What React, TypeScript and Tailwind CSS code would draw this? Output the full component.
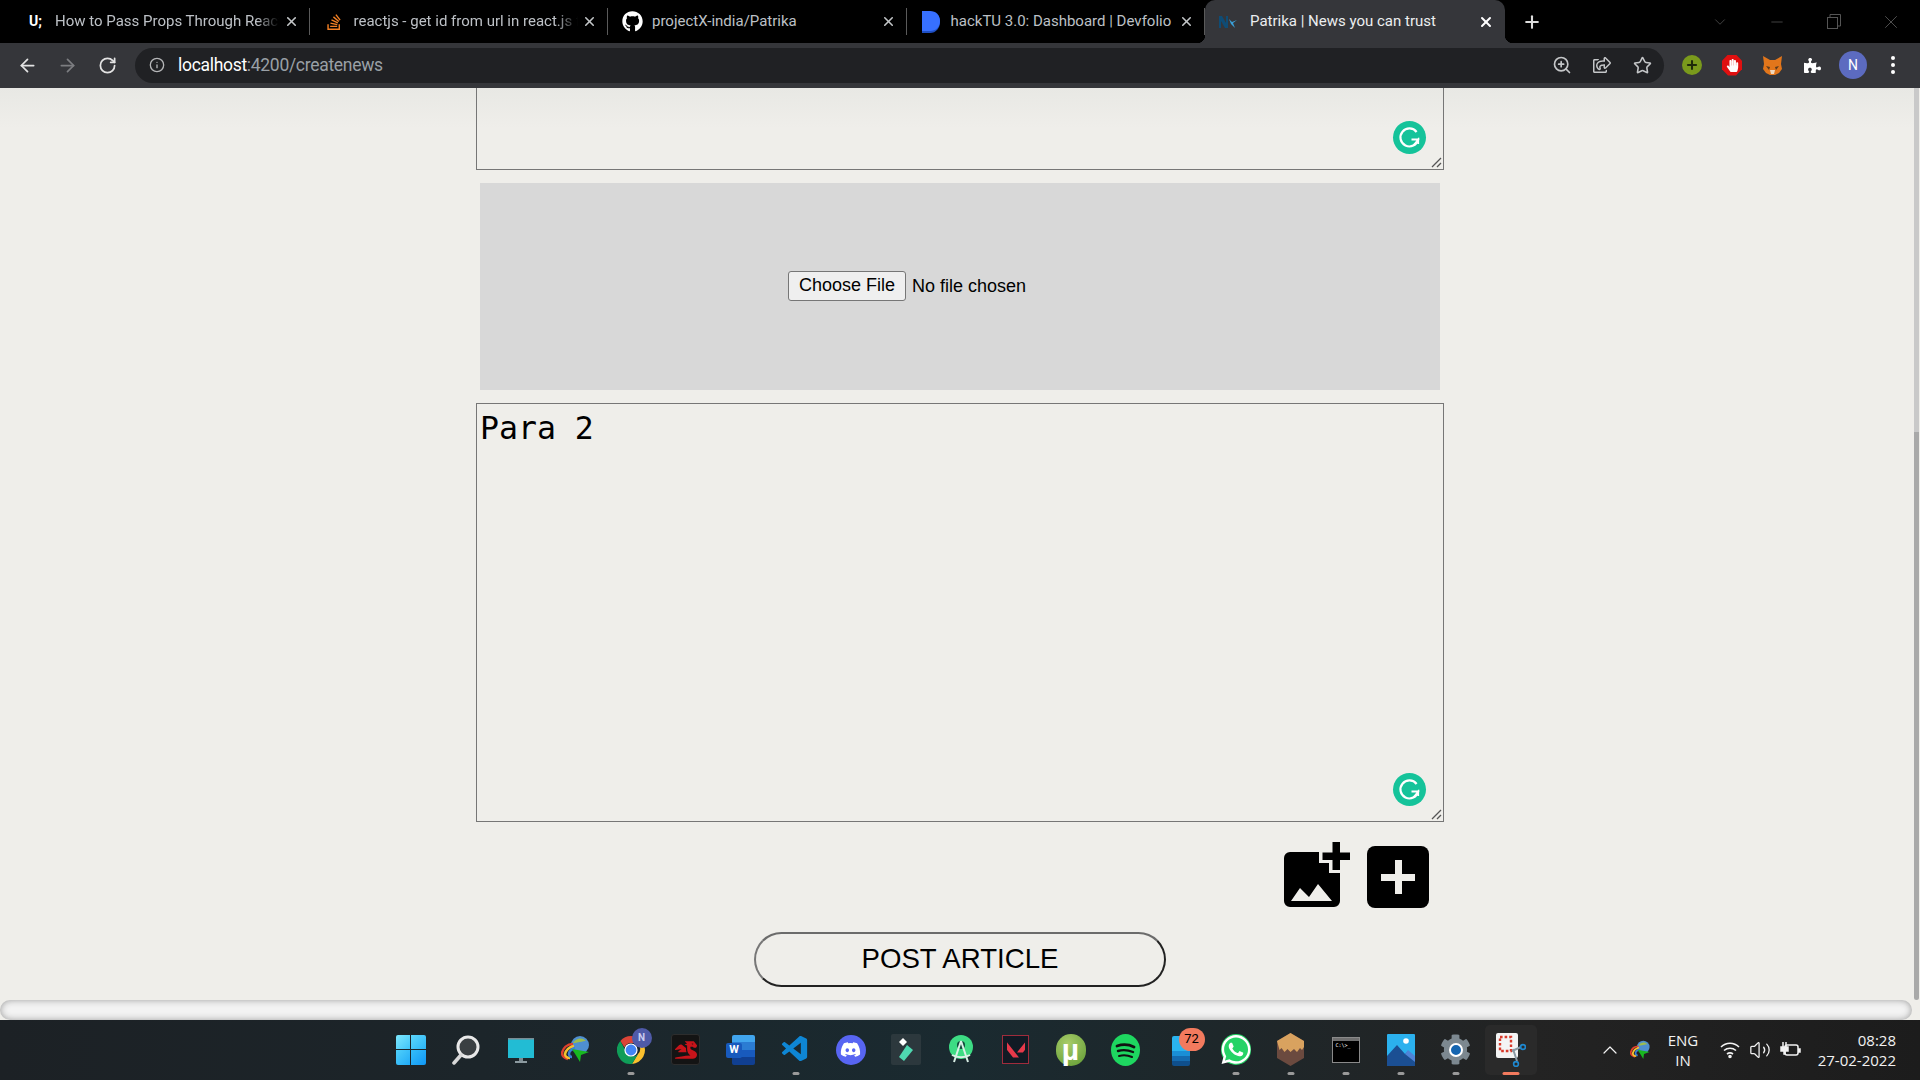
import React from 'react';
import { ArrowLeft, ArrowRight, RotateCw, Info, ZoomIn, Star, Plus, X, Minus, ChevronDown, ChevronUp, Volume2 } from 'lucide-react';
import { FaGithub, FaStackOverflow, FaRegShareSquare, FaHandPaper, FaPuzzlePiece, FaDragon, FaDiscord, FaWhatsapp, FaCog } from 'react-icons/fa';
import { VscVscode } from 'react-icons/vsc';
import { SiValorant } from 'react-icons/si';

const NxIcon = () => (
  <svg width="20" height="16" viewBox="0 0 20 16">
    <path d="M1 14V2h3l4 7V2h2v12H7L3 7v7z" fill="#0f4c75" />
    <path d="M11 5l3 3 5-2-4 3 2 5-4-4z" fill="#3aa0d8" />
  </svg>
);

const DevfolioIcon = () => (
  <svg width="20" height="24" viewBox="0 0 20 24">
    <path d="M1 2h8c6 0 10 4 10 10s-4 11-10 11H1z" fill="#1f4fc4" />
    <path d="M1 1h8c6 0 10 4 10 10s-4 10-10 10H1z" fill="#3770ff" />
  </svg>
);

const tabs = [
  { title: 'How to Pass Props Through React Router', icon: <span className="text-[14px] font-bold text-white">U;</span>, fade: true },
  { title: 'reactjs - get id from url in react.js for', icon: <FaStackOverflow size={18} color="#f48024" />, fade: true },
  { title: 'projectX-india/Patrika', icon: <FaGithub size={21} color="#ffffff" /> },
  { title: 'hackTU 3.0: Dashboard | Devfolio', icon: <DevfolioIcon /> },
];

const Tab = ({ title, icon, fade }: { title: string; icon: React.ReactNode; fade?: boolean }) => (
  <div className="flex h-full w-[298.5px] shrink-0 items-center border-r border-[#4a4a4a] [border-image:linear-gradient(transparent_20%,#5a5a5a_20%,#5a5a5a_80%,transparent_80%)_1]">
    <div className="flex w-[44px] shrink-0 items-center justify-center pl-[5px]">{icon}</div>
    <div className={`w-[224px] shrink-0 overflow-hidden whitespace-nowrap text-[15px] text-[#bdc1c6] ${fade ? '[mask-image:linear-gradient(to_right,black_90%,transparent)]' : ''}`}>
      {title}
    </div>
    <div className="flex flex-1 items-center justify-center pr-[5px]">
      <X size={15} strokeWidth={2.5} color="#c4c7c9" />
    </div>
  </div>
);

const TabStrip = () => (
  <div className="flex h-[43px] items-stretch bg-black pl-[11px]">
    {tabs.map((tab) => (
      <Tab key={tab.title} {...tab} />
    ))}
    <div className="relative flex w-[300px] shrink-0 items-center rounded-t-[10px] bg-[#35363a]">
      <span className="absolute bottom-0 left-[-8px] h-[8px] w-[8px] bg-[radial-gradient(circle_at_0_0,#000_8px,#35363a_8.5px)]"></span>
      <span className="absolute bottom-0 right-[-8px] h-[8px] w-[8px] bg-[radial-gradient(circle_at_100%_0,#000_8px,#35363a_8.5px)]"></span>
      <div className="flex w-[45px] shrink-0 items-center justify-center">
        <NxIcon />
      </div>
      <div className="w-[225px] shrink-0 whitespace-nowrap text-[15px] text-[#eceef0]">Patrika | News you can trust</div>
      <div className="flex flex-1 items-center justify-center pr-[9px]">
        <X size={16} strokeWidth={3} color="#ffffff" />
      </div>
    </div>
    <div className="flex w-[54px] shrink-0 items-center justify-center">
      <Plus size={20} strokeWidth={2.5} color="#dcdcdc" />
    </div>
    <div className="flex flex-1 items-center pl-[132px] text-[#555555]">
      <div className="flex w-[57px] justify-center"><ChevronDown size={18} strokeWidth={1} /></div>
      <div className="flex w-[57px] justify-center"><Minus size={18} strokeWidth={1} /></div>
      <div className="flex w-[57px] justify-center">
        <svg width="14" height="15" viewBox="0 0 14 15" fill="none" stroke="#555555">
          <rect x="0.5" y="3.5" width="10" height="11" />
          <path d="M3 3V.5h10.5V12H11" />
        </svg>
      </div>
      <div className="flex w-[57px] justify-center"><X size={22} strokeWidth={1} /></div>
    </div>
  </div>
);

const Extensions = () => (
  <div className="ml-[7px] flex items-center">
    <div className="flex w-[41px] justify-center">
      <div className="flex h-[20px] w-[20px] items-center justify-center rounded-full bg-[#7a9a1c]">
        <Plus size={14} strokeWidth={3.5} color="#1f2a0a" />
      </div>
    </div>
    <div className="flex w-[40px] justify-center">
      <div className="flex h-[21px] w-[20px] items-center justify-center bg-[#e01010] [clip-path:polygon(30%_0,70%_0,100%_30%,100%_70%,70%_100%,30%_100%,0_70%,0_30%)]">
        <FaHandPaper size={13} color="#ffffff" />
      </div>
    </div>
    <div className="flex w-[40px] justify-center">
      <svg width="21" height="21" viewBox="0 0 21 21">
        <path d="M1 1l7 4h5l7-4-1 8 1 5-3 4-4 2H8l-4-2-3-4 1-5z" fill="#e2761b" />
        <path d="M4 11l4 1-1 3zM17 11l-4 1 1 3z" fill="#5c3a1e" />
        <path d="M8 15h5l-1 4H9z" fill="#f0d8bd" />
      </svg>
    </div>
    <div className="flex w-[41px] justify-center">
      <FaPuzzlePiece size={17} color="#ffffff" />
    </div>
    <div className="flex w-[40px] justify-center">
      <div className="flex h-[28px] w-[28px] items-center justify-center rounded-full bg-[#5c6bc0] text-[14px] text-white">N</div>
    </div>
    <div className="flex w-[40px] flex-col items-center gap-[3px]">
      <span className="h-[4px] w-[4px] rounded-full bg-white"></span>
      <span className="h-[4px] w-[4px] rounded-full bg-white"></span>
      <span className="h-[4px] w-[4px] rounded-full bg-white"></span>
    </div>
  </div>
);

const Toolbar = () => (
  <div className="flex h-[45px] items-center bg-[#35363a] pb-[1px] pl-[7px]">
    <div className="flex w-[40px] justify-center"><ArrowLeft size={21} color="#e3e3e3" strokeWidth={2} /></div>
    <div className="flex w-[40px] justify-center"><ArrowRight size={21} color="#7c7d80" strokeWidth={2} /></div>
    <div className="flex w-[41px] justify-center"><RotateCw size={19} color="#e3e3e3" strokeWidth={2.2} /></div>
    <div className="ml-[7px] flex h-[35px] w-[1529px] items-center rounded-full bg-[#202124]">
      <div className="flex w-[43px] justify-center"><Info size={16} color="#b5b6b8" /></div>
      <div className="whitespace-nowrap text-[17.5px] tracking-[-0.3px] text-[#9aa0a6]">
        <span className="text-white">localhost</span>:4200/createnews
      </div>
      <div className="ml-auto flex items-center pr-[2px] text-[#c4c6c8]">
        <div className="flex w-[40px] justify-center"><ZoomIn size={20} /></div>
        <div className="flex w-[40px] justify-center"><FaRegShareSquare size={18} /></div>
        <div className="flex w-[40px] justify-center"><Star size={19} /></div>
      </div>
    </div>
    <Extensions />
  </div>
);

const GrammarlyBadge = () => (
  <div className="absolute bottom-[16px] right-[18px] flex h-[33px] w-[33px] items-center justify-center rounded-full bg-[#15c39a]">
    <svg width="23" height="23" viewBox="0 0 23 23" fill="none" stroke="#ffffff" strokeWidth="2.2">
      <path d="M18.6 6A9 9 0 1 0 20.2 13.5H13.5" />
      <path d="M15.500 19.500 20.200 13.500V18" strokeWidth="1.8" />
    </svg>
  </div>
);

const ResizeGrip = () => (
  <svg className="pointer-events-none absolute bottom-[2px] right-[2px]" width="11" height="11" viewBox="0 0 11 11" fill="none" stroke="#555555" strokeWidth="1.3">
    <path d="M1 10 10 1M6 10 10 6" />
  </svg>
);

const Composer = () => (
  <div className="flex flex-1 flex-col items-center bg-[linear-gradient(#e8e8e4,#efeeea_40px)] pl-[6px]">
    <div className="relative h-[82px] w-[968px]">
      <textarea readOnly className="block h-full w-full resize-none border border-t-0 border-[#767676] bg-transparent outline-none"></textarea>
      <GrammarlyBadge />
      <ResizeGrip />
    </div>

    <div className="mt-[13px] flex h-[207px] w-[960px] items-center justify-center bg-[#d8d8d8]">
      <input
        type="file"
        className="mb-[2px] w-[344px] font-['Liberation_Sans',sans-serif] text-[18px] text-black file:mr-[6px] file:h-[30px] file:rounded-[3px] file:border file:border-[#767676] file:bg-[#efefef] file:px-[10px] file:text-[18px]"
      />
    </div>

    <div className="relative mt-[13px] h-[419px] w-[968px]">
      <textarea
        readOnly
        defaultValue="Para 2"
        className="block h-full w-full resize-none border border-[#767676] bg-transparent px-[3px] pb-[1px] pt-[2px] font-['DejaVu_Sans_Mono',monospace] text-[31.5px] leading-[44px] text-black outline-none"
      ></textarea>
      <GrammarlyBadge />
      <ResizeGrip />
    </div>

    <div className="mt-[20px] flex h-[66px] w-[968px] items-end justify-end gap-[17px] pr-[15px]">
      <svg width="66" height="66" viewBox="0 0 66 66">
        <path d="M6 10H35V21H45V31H56V59a6 6 0 0 1-6 6H6a6 6 0 0 1-6-6V16a6 6 0 0 1 6-6z" fill="#000000" />
        <path d="M48.500 0H56V10.500H66V18H56V28H48.500V18H38.500V10.500H48.500z" fill="#000000" />
        <path d="M7 59 16 46 25 55 34 42 48 59z" fill="#efeeea" />
      </svg>
      <div className="flex h-[62px] w-[62px] items-center justify-center rounded-[8px] bg-black">
        <div className="relative h-[34px] w-[34px]">
          <span className="absolute left-[13.5px] top-0 h-[34px] w-[7px] bg-[#efeeea]"></span>
          <span className="absolute left-0 top-[13.5px] h-[7px] w-[34px] bg-[#efeeea]"></span>
        </div>
      </div>
    </div>

    <button className="mt-[24px] h-[55px] w-[412px] rounded-full border-2 border-[#222222] border-l-[#777777] border-t-[#6b6b6b] pb-[2px] font-['Liberation_Sans',sans-serif] text-[27.6px] text-black">
      POST ARTICLE
    </button>
  </div>
);

const Pill = ({ active }: { active?: boolean }) => (
  <span className={`absolute bottom-[5px] left-1/2 h-[3px] -translate-x-1/2 rounded-full ${active ? 'w-[17px] bg-[#f27a5e]' : 'w-[7px] bg-[#9a9a9a]'}`}></span>
);

const IdmIcon = ({ size = 30 }: { size?: number }) => (
  <svg width={size} height={size} viewBox="0 0 30 30" fill="none">
    <circle cx="19" cy="10" r="9" fill="#4f8fd0" />
    <path d="M12 8c3-5 9-6 13-2-3 0-9 2-13 2z" fill="#9dbd4f" />
    <path d="M12 9C6 9 2 13 1 18c0 3 3 5 6 6" stroke="#e0402c" strokeWidth="2.5" />
    <path d="M13 11c-4 1-8 4-9 8 0 2 2 4 5 4" stroke="#f2c230" strokeWidth="2.5" />
    <path d="M14 13c-3 1-6 3-6 6 0 1 1 3 3 3" stroke="#3b7fd4" strokeWidth="2.5" />
    <path d="M11 14l17 3-8 3-1 7-3-5z" fill="#18b820" />
  </svg>
);

const ChromeIcon = () => (
  <svg width="28" height="28" viewBox="0 0 28 28">
    <path d="M14 0a14 14 0 0 1 12.1 7H14a7 7 0 0 0-6.5 4.5L3.3 5A14 14 0 0 1 14 0z" fill="#db4437" />
    <path d="M26.1 7A14 14 0 0 1 15 28l6-10a7 7 0 0 0-1-11z" fill="#fbc02d" />
    <path d="M3.3 5l6 11a7 7 0 0 0 11.7 2l-6 10A14 14 0 0 1 3.3 5z" fill="#0f9d58" />
    <circle cx="14" cy="14" r="6" fill="#4285f4" stroke="#ffffff" strokeWidth="1.2" />
  </svg>
);

const taskbarIcons: { key: string; icon: React.ReactNode; pill?: boolean }[] = [
  {
    key: 'start',
    icon: (
      <div className="grid h-[30px] w-[30px] grid-cols-2 gap-[1.5px]">
        <span className="rounded-tl-[2px] bg-linear-to-br from-[#7ce8fd] to-[#3dc4f8]"></span>
        <span className="rounded-tr-[2px] bg-linear-to-br from-[#5bd6fb] to-[#28b4f7]"></span>
        <span className="rounded-bl-[2px] bg-linear-to-br from-[#4fd0fa] to-[#1eaaf6]"></span>
        <span className="rounded-br-[2px] bg-linear-to-br from-[#34bdf9] to-[#0f97f5]"></span>
      </div>
    ),
  },
  {
    key: 'search',
    icon: (
      <svg width="28" height="30" viewBox="0 0 28 30" fill="none">
        <circle cx="16" cy="12" r="10" fill="#3a3f42" stroke="#e8e8e8" strokeWidth="3" />
        <path d="M9 20 2 28" stroke="#d8d8d8" strokeWidth="3.5" strokeLinecap="round" />
      </svg>
    ),
  },
  {
    key: 'desktop',
    icon: (
      <svg width="28" height="28" viewBox="0 0 28 28">
        <rect x="1" y="2" width="26" height="20" fill="#22bcd4" />
        <rect x="1" y="2" width="26" height="1.5" fill="#7a8c94" />
        <rect x="12" y="22" width="4" height="3" fill="#7d8b92" />
        <rect x="8" y="25" width="12" height="2" fill="#8c9aa0" />
      </svg>
    ),
  },
  { key: 'idm', icon: <IdmIcon /> },
  {
    key: 'chrome',
    pill: true,
    icon: (
      <div className="relative">
        <ChromeIcon />
        <span className="absolute left-[15px] top-[-8px] flex h-[20px] w-[20px] items-center justify-center rounded-full bg-[#4f5aa8] text-[10px] font-bold text-[#c9cdf0]">N</span>
      </div>
    ),
  },
  {
    key: 'msi',
    icon: (
      <div className="flex h-[31px] w-[29px] items-center justify-center rounded-[3px] border border-[#2d2d2d] bg-[#141414]">
        <FaDragon size={22} color="#c8141a" />
      </div>
    ),
  },
  {
    key: 'word',
    icon: (
      <div className="relative h-[30px] w-[29px]">
        <div className="absolute right-0 top-0 flex h-full w-[23px] flex-col overflow-hidden rounded-[2px]">
          <span className="flex-1 bg-[#41a5ee]"></span>
          <span className="flex-1 bg-[#2b7cd3]"></span>
          <span className="flex-1 bg-[#185abd]"></span>
          <span className="flex-1 bg-[#103f91]"></span>
        </div>
        <span className="absolute left-0 top-[8px] flex h-[15px] w-[16px] items-center justify-center rounded-[2px] bg-[#185abd] text-[11px] font-bold text-white">W</span>
      </div>
    ),
  },
  { key: 'vscode', pill: true, icon: <VscVscode size={31} color="#0e86d4" /> },
  {
    key: 'discord',
    icon: (
      <div className="flex h-[30px] w-[30px] items-center justify-center rounded-full bg-[#5865f2]">
        <FaDiscord size={21} color="#ffffff" />
      </div>
    ),
  },
  {
    key: 'filmora',
    icon: (
      <div className="flex h-[31px] w-[30px] items-center justify-center rounded-[2px] bg-[#2c383d]">
        <svg width="16" height="24" viewBox="0 0 16 24">
          <path d="M5 0l4 4-4 4-4-4z" fill="#ffffff" />
          <path d="M9 7l6 5-9 11-5-4z" fill="#4fd8b0" />
        </svg>
      </div>
    ),
  },
  {
    key: 'androidstudio',
    icon: (
      <svg width="24" height="30" viewBox="0 0 24 30" fill="none">
        <circle cx="12" cy="12" r="12" fill="#3ddc84" />
        <circle cx="12" cy="10" r="4" fill="#0f4a3a" />
        <path d="M12 6 5 27M12 6l7 21" stroke="#d9efe6" strokeWidth="2" />
        <path d="M3 20c5 3 13 3 18 0" stroke="#d9efe6" strokeWidth="2" />
      </svg>
    ),
  },
  {
    key: 'valorant',
    icon: (
      <div className="flex h-[29px] w-[27px] items-center justify-center border border-[#a02c3c] bg-[#111a24]">
        <SiValorant size={18} color="#e8394a" />
      </div>
    ),
  },
  {
    key: 'utorrent',
    icon: (
      <div className="flex h-[32px] w-[30px] items-center justify-center rounded-full bg-[radial-gradient(circle_at_40%_30%,#a8cc6a,#5f9a32)] font-['Liberation_Sans',sans-serif] text-[30px] font-bold leading-none text-white">
        µ
      </div>
    ),
  },
  {
    key: 'spotify',
    icon: (
      <svg width="29" height="32" viewBox="0 0 29 32" fill="none">
        <ellipse cx="14.5" cy="16" rx="14.5" ry="16" fill="#1ed760" />
        <path d="M6 12c6-2 12-1.5 17 1" stroke="#111111" strokeWidth="2.8" strokeLinecap="round" />
        <path d="M7 17c5-1.5 10-1 15 1" stroke="#111111" strokeWidth="2.4" strokeLinecap="round" />
        <path d="M8 22c4-1 9-.7 13 1" stroke="#111111" strokeWidth="2" strokeLinecap="round" />
      </svg>
    ),
  },
  {
    key: 'store',
    icon: (
      <div className="relative mt-[2px] h-[30px] w-[18px]">
        <div className="flex h-full w-full flex-col overflow-hidden rounded-[2px]">
          <span className="flex-[3] bg-[#2ab4ef]"></span>
          <span className="flex-1 bg-[#1a8fd6]"></span>
          <span className="flex-1 bg-[#146bb0]"></span>
          <span className="flex-1 bg-[#0f4f8c]"></span>
        </div>
        <span className="absolute left-[7px] top-[-8px] flex h-[23px] w-[26px] items-center justify-center rounded-full bg-[#f27a5e] text-[13px] text-black">72</span>
      </div>
    ),
  },
  {
    key: 'whatsapp',
    pill: true,
    icon: (
      <div className="flex h-[31px] w-[30px] items-center justify-center rounded-full bg-[#25d366]">
        <FaWhatsapp size={33} color="#ffffff" />
      </div>
    ),
  },
  {
    key: 'box',
    pill: true,
    icon: (
      <svg width="27" height="33" viewBox="0 0 27 33">
        <path d="M13.5 0 27 8v17l-13.5 8L0 25V8z" fill="#6b4a3f" />
        <path d="M13.5 0 27 8v6l-2 3-2-2-3 4-3-3-3.5 3-3-3-3 3-3-4-2 2L0 8z" fill="#d9a25f" />
      </svg>
    ),
  },
  {
    key: 'terminal',
    pill: true,
    icon: (
      <div className="h-[26px] w-[28px] border border-[#8a8a8a] bg-black">
        <div className="h-[3px] bg-[#6f6f6f]"></div>
        <div className="pl-[3px] font-['DejaVu_Sans_Mono',monospace] text-[5px] leading-[8px] text-white">C:\&gt;_</div>
      </div>
    ),
  },
  {
    key: 'photos',
    pill: true,
    icon: (
      <svg width="28" height="32" viewBox="0 0 28 32">
        <rect width="28" height="32" rx="1" fill="#2bb1ee" />
        <circle cx="19" cy="7" r="2.8" fill="#ffffff" />
        <path d="M0 32V22L10 11l8 9 3-3 7 7v8z" fill="#1b4f93" />
        <path d="M18 20l3-4 7 6v6z" fill="#4f84d8" />
      </svg>
    ),
  },
  {
    key: 'settings',
    pill: true,
    icon: (
      <div className="relative flex h-[31px] w-[31px] items-center justify-center">
        <FaCog size={31} color="#7c8890" />
        <span className="absolute left-[8.5px] top-[8.5px] h-[14px] w-[14px] rounded-full border-2 border-white bg-[#1565b0]"></span>
      </div>
    ),
  },
];

const SnipIcon = () => (
  <svg width="30" height="34" viewBox="0 0 30 34" fill="none">
    <rect width="22" height="25" rx="2" fill="#f4f4f4" />
    <rect x="4" y="4" width="11" height="14" stroke="#d93a2b" strokeWidth="2.4" strokeDasharray="2.6 2" />
    <path d="M16 18 25 14M17 16l4 12" stroke="#8b9aa4" strokeWidth="2" />
    <circle cx="27" cy="14" r="2.4" stroke="#1e88d0" strokeWidth="1.6" />
    <circle cx="20" cy="31" r="2.4" stroke="#1e88d0" strokeWidth="1.6" />
  </svg>
);

const Taskbar = () => (
  <div className="flex h-[60px] items-stretch bg-[linear-gradient(90deg,#1c2125,#1c252a_25%,#1a2a30_50%,#232323_80%,#1c1c1c)] pl-[383px]">
    {taskbarIcons.map((item) => (
      <div key={item.key} className="relative flex w-[55px] items-center justify-center pb-[1px]">
        {item.icon}
        {item.pill && <Pill />}
      </div>
    ))}
    <div className="relative flex w-[55px] items-center justify-center">
      <div className="flex h-[50px] w-[52px] items-center justify-center rounded-[5px] bg-[#2a2a2a]">
        <SnipIcon />
      </div>
      <Pill active />
    </div>
    <div className="ml-[60px] flex items-center font-['Open_Sans',sans-serif] text-[15px] text-[#f2f2f2]">
      <ChevronUp size={24} strokeWidth={1.2} />
      <div className="ml-[8px]"><IdmIcon size={21} /></div>
      <div className="ml-[16px] flex w-[32px] flex-col items-center leading-[20px]">
        <span>ENG</span>
        <span>IN</span>
      </div>
      <svg className="ml-[21px]" width="20" height="18" viewBox="0 0 20 18" fill="none" stroke="#f2f2f2" strokeWidth="1.6">
        <path d="M1 6c5-5 13-5 18 0M4 9.5c3.500-3 8.500-3 12 0M7 13c2-1.500 4-1.500 6 0" />
        <circle cx="10" cy="15.500" r="1" fill="#f2f2f2" />
      </svg>
      <Volume2 className="ml-[9px]" size={22} strokeWidth={1.4} />
      <svg className="ml-[9px]" width="22" height="18" viewBox="0 0 22 18" fill="none" stroke="#f2f2f2" strokeWidth="1.5">
        <rect x="5" y="4" width="13" height="10" rx="2" />
        <path d="M18 8h2v3h-2" fill="#f2f2f2" />
        <path d="M1 6h7v4H5v3H4V10H1zM3 6V1M6 6V1" fill="#f2f2f2" />
      </svg>
      <div className="ml-[8px] flex w-[86px] flex-col items-end leading-[20px]">
        <span>08:28</span>
        <span>27-02-2022</span>
      </div>
    </div>
  </div>
);

export default function App() {
  return (
    <div className="flex h-[1080px] w-[1920px] flex-col overflow-hidden bg-[#efeeea] font-['Roboto',sans-serif]">
      <TabStrip />
      <Toolbar />
      <div className="flex h-[912px]">
        <Composer />
        {/* page scrollbar */}
        <div className="flex w-[6px] flex-col pr-[1px]">
          <div className="h-[344px] bg-[#c9c9c9]"></div>
          <div className="flex-1 rounded-b-full bg-[#a9a9a9]"></div>
        </div>
      </div>
      <div className="h-[20px] w-[1912px] rounded-full bg-[#f3f3f3] shadow-[inset_0_0_7px_#9c9c9c]"></div>
      <Taskbar />
    </div>
  );
}
